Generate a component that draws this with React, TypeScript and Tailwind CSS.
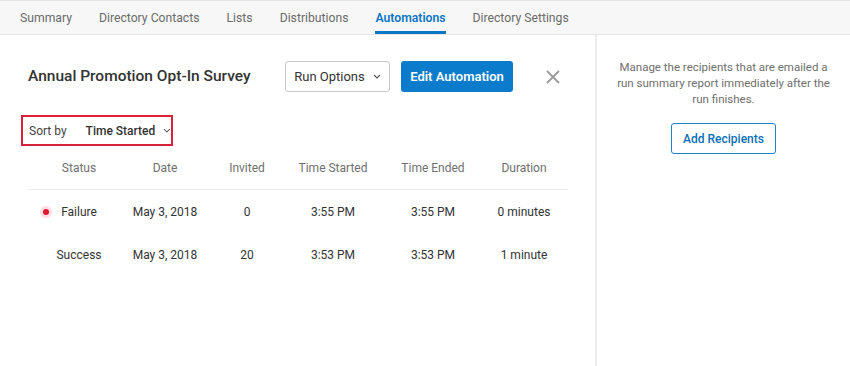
import React from 'react';

const font = { fontFamily: 'Roboto, "Liberation Sans", sans-serif' };

const tabs = ['Summary', 'Directory Contacts', 'Lists', 'Distributions', 'Automations', 'Directory Settings'];

const runs = [
  { status: 'Failure', date: 'May 3, 2018', invited: '0', started: '3:55 PM', ended: '3:55 PM', duration: '0 minutes', failed: true },
  { status: 'Success', date: 'May 3, 2018', invited: '20', started: '3:53 PM', ended: '3:53 PM', duration: '1 minute', failed: false },
];

const Chevron: React.FC<{ className?: string }> = ({ className }) => (
  <svg width="8" height="5" viewBox="0 0 8 5" className={className}>
    <polyline points="1,1 4,4 7,1" fill="none" stroke="currentColor" strokeWidth="1.1" />
  </svg>
);

const cols = 'grid grid-cols-[102px_70px_94px_78px_122px_60px] items-center text-center whitespace-nowrap';

export default function App() {
  return (
    <div className="w-[850px] h-[366px] bg-white overflow-hidden text-[#333]" style={font}>
      {/* Tabs */}
      <div className="h-[35px] bg-[#f7f7f7] border-t border-b border-[#e6e6e6] flex items-stretch pl-[20px] gap-[27px] text-[12.2px] text-[#6b6b6b]">
        {tabs.map((t) => (
          <div
            key={t}
            className={`flex items-center pt-[5px] border-b-[3px] ${
              t === 'Automations' ? 'border-[#0b76c4] text-[#0b76c4] font-semibold' : 'border-transparent'
            }`}
          >
            {t}
          </div>
        ))}
      </div>

      <div className="flex h-[331px]">
        {/* Left content */}
        <div className="w-[597px] border-r-2 border-[#ececec]">
          <div className="flex items-center pl-[28px] pt-[26px]">
            <div className="text-[15.5px] font-medium text-[#333] w-[257px] whitespace-nowrap">Annual Promotion Opt-In Survey</div>
            <button className="h-[31px] w-[105px] border border-[#c8c8c8] rounded-[3px] flex items-center justify-center gap-[8px] text-[13px] text-[#333]">
              Run Options <Chevron className="text-[#555]" />
            </button>
            <button className="ml-[11px] h-[31px] w-[112px] bg-[#0b7bcb] rounded-[3px] text-white text-[13px] font-semibold">
              Edit Automation
            </button>
            <svg width="14" height="14" viewBox="0 0 14 14" className="ml-[33px]">
              <path d="M1 1 L13 13 M13 1 L1 13" stroke="#9a9a9a" strokeWidth="1.8" />
            </svg>
          </div>

          <div className="ml-[21px] mt-[23px] w-[152px] h-[31px] border-2 border-[#d9213a] flex items-center pl-[6px] text-[12px] whitespace-nowrap">
            <span className="text-[#444]">Sort by</span>
            <span className="ml-[19px] font-medium text-[#333]">Time Started</span>
            <Chevron className="ml-[8px] text-[#666]" />
          </div>

          <div className="ml-[28px] w-[540px]">
            <div className={`${cols} h-[44px] text-[12px] text-[#707070] border-b border-[#ececec]`}>
              <div>Status</div>
              <div>Date</div>
              <div>Invited</div>
              <div>Time Started</div>
              <div>Time Ended</div>
              <div>Duration</div>
            </div>
            {runs.map((r) => (
              <div key={r.status} className={`${cols} h-[43px] text-[12px] text-[#333]`}>
                <div className="relative">
                  {r.failed && (
                    <span className="absolute left-[12px] top-1/2 -translate-y-1/2 w-[12px] h-[12px] rounded-full bg-[#fcdfe2] flex items-center justify-center">
                      <span className="w-[6px] h-[6px] rounded-full bg-[#e0182d]" />
                    </span>
                  )}
                  {r.status}
                </div>
                <div>{r.date}</div>
                <div>{r.invited}</div>
                <div>{r.started}</div>
                <div>{r.ended}</div>
                <div>{r.duration}</div>
              </div>
            ))}
          </div>
        </div>

        {/* Right panel */}
        <div className="flex-1 flex flex-col items-center pt-[24px]">
          <p className="w-[220px] text-center text-[11.5px] leading-[16px] text-[#6f6f6f]">
            Manage the recipients that are emailed a run summary report immediately after the run finishes.
          </p>
          <button className="mt-[16px] h-[31px] w-[105px] border border-[#1a82d0] rounded-[3px] text-[12px] font-medium text-[#0b6fb8]">
            Add Recipients
          </button>
        </div>
      </div>
    </div>
  );
}
